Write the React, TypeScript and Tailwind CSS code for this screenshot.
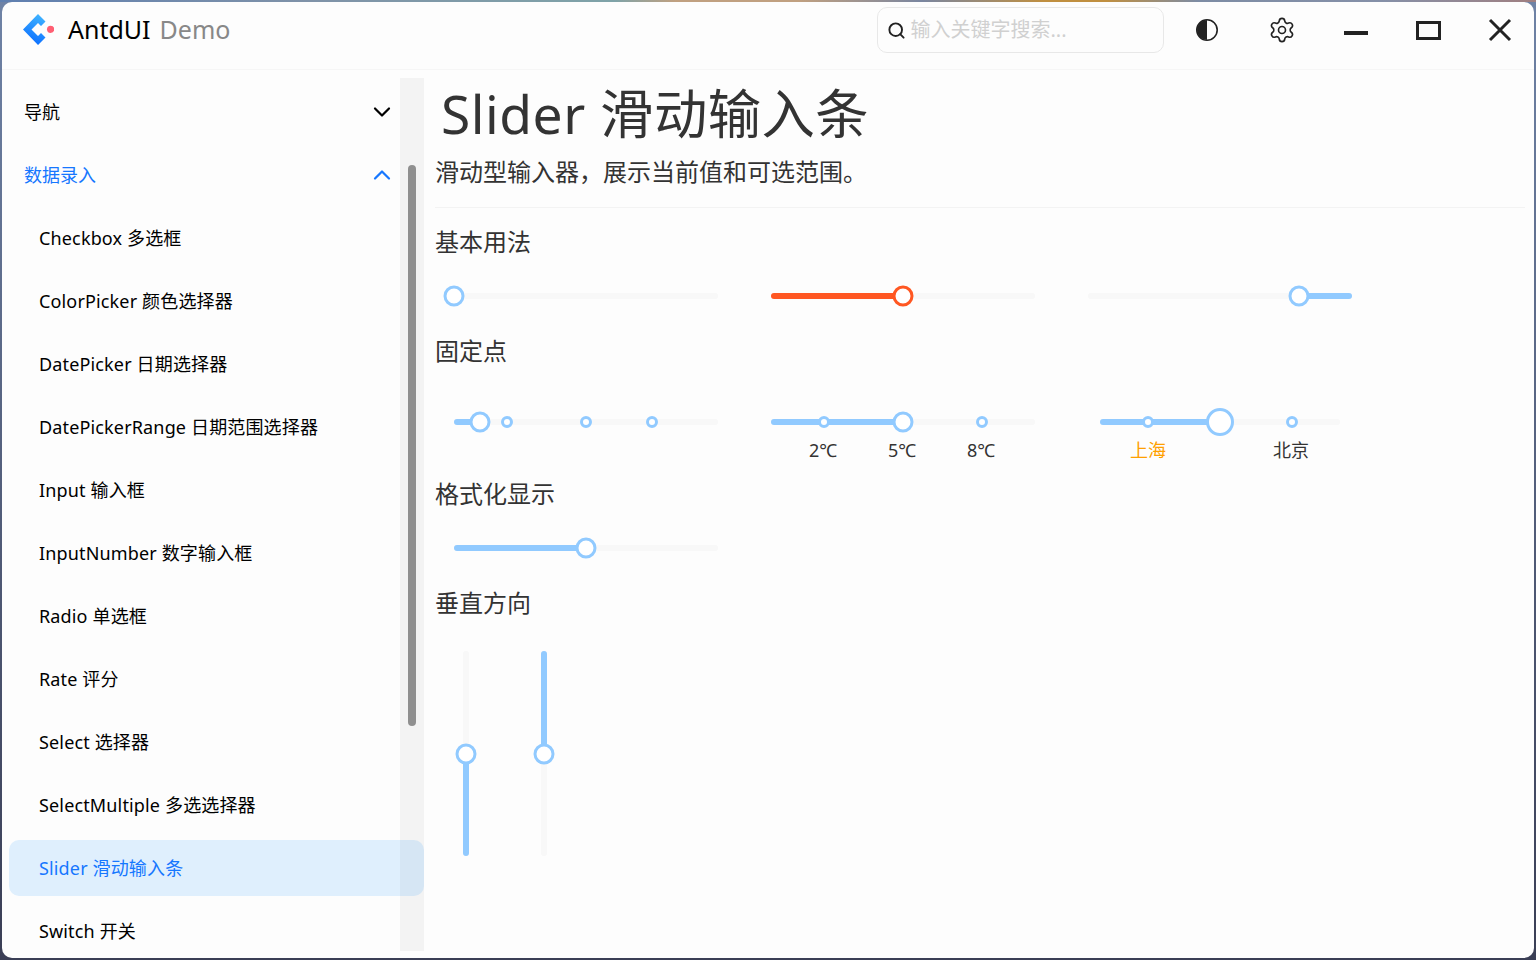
import { ChevronDown, ChevronUp, Search, Settings } from "lucide-react";

const menuItems = [
  "Checkbox 多选框",
  "ColorPicker 颜色选择器",
  "DatePicker 日期选择器",
  "DatePickerRange 日期范围选择器",
  "Input 输入框",
  "InputNumber 数字输入框",
  "Radio 单选框",
  "Rate 评分",
  "Select 选择器",
  "SelectMultiple 多选选择器",
  "Slider 滑动输入条",
  "Switch 开关",
];

interface SliderProps {
  width?: number;
  from?: number;
  to: number;
  thumb: number;
  thumbSize?: number;
  dots?: number[];
  active?: string;
  thumbBorder?: string;
}

function Slider({ width = 264, from = 0, to, thumb, thumbSize = 21, dots = [], active = "bg-[#91caff]", thumbBorder = "border-[#91caff]" }: SliderProps) {
  return (
    <div className="relative h-[6px] rounded-full bg-[#f8f8f8]" style={{ width }}>
      <div className={`absolute top-0 h-[6px] rounded-full ${active}`} style={{ left: from, width: to - from }} />
      {dots.map((d) => (
        <div
          key={d}
          className="absolute top-[-3px] h-3 w-3 -translate-x-1/2 rounded-full border-[3px] border-[#91caff] bg-white"
          style={{ left: d }}
        />
      ))}
      <div
        className={`absolute top-[3px] -translate-x-1/2 -translate-y-1/2 rounded-full border-[3px] bg-white ${thumbBorder}`}
        style={{ left: thumb, width: thumbSize, height: thumbSize }}
      />
    </div>
  );
}

function VerticalSlider({ reverse = false }: { reverse?: boolean }) {
  return (
    <div className="relative h-[205px] w-[6px] rounded-full bg-[#f8f8f8]">
      <div className={`absolute left-0 w-[6px] rounded-full bg-[#91caff] ${reverse ? "top-0 h-[103px]" : "bottom-0 h-[102px]"}`} />
      <div className="absolute left-[3px] top-[103px] h-[21px] w-[21px] -translate-x-1/2 -translate-y-1/2 rounded-full border-[3px] border-[#91caff] bg-white" />
    </div>
  );
}

function Heading({ children, className }: { children: string; className: string }) {
  return <h3 className={`text-[24px] leading-[32px] text-[#333] ${className}`}>{children}</h3>;
}

function Logo() {
  return (
    <svg width="32" height="32" viewBox="0 0 32 32">
      <defs>
        <linearGradient id="logoBlue" x1="0.7" y1="0" x2="0.4" y2="1">
          <stop offset="0" stopColor="#40b4ff" />
          <stop offset="1" stopColor="#0a6cff" />
        </linearGradient>
      </defs>
      <path
        d="M16 0 L23.5 7.5 L19 12 L16 9 L9.5 15.5 L16 22 L19 19 L23.5 23.5 L16 31 L1 15.5 Z"
        fill="url(#logoBlue)"
      />
      <circle cx="28.6" cy="15.3" r="3.6" fill="#ff5f73" />
    </svg>
  );
}

export default function App() {
  return (
    <div className="h-[960px] w-[1536px] overflow-hidden bg-gradient-to-b from-[#6f83a6] to-[#3a3e55] font-['Noto_Sans','Noto_Sans_CJK_SC',sans-serif]">
      <div className="h-[2px] bg-[linear-gradient(90deg,#5f7fb0_0%,#7f92a8_20%,#7fa3a8_40%,#c0a080_44%,#c0a080_52%,#7a86a0_60%,#c08f40_68%,#c08f40_72%,#7d8ca4_78%,#8590a8_90%,#a07f80_100%)]" />
      <div className="mx-[2px] flex h-[956px] flex-col overflow-hidden rounded-[10px] bg-[#fdfdfd]">
        <header className="flex h-[68px] shrink-0 items-center border-b border-[#f6f6f6] pb-[11px] pl-5">
          <Logo />
          <span className="ml-[14px] text-[25px] text-black">AntdUI</span>
          <span className="ml-[9px] text-[25px] text-[#888]">Demo</span>
          <div className="ml-[647px] flex h-[46px] w-[287px] items-center rounded-[10px] border border-[#e8e8e8] pl-[9px]">
            <Search className="h-[19px] w-[19px] text-[#222]" strokeWidth={2.4} />
            <span className="ml-[4px] text-[20px] text-[#d0d0d0]">输入关键字搜索...</span>
          </div>
          <svg className="ml-[31px]" width="24" height="24" viewBox="0 0 24 24">
            <circle cx="12" cy="12" r="10.2" fill="none" stroke="#222" strokeWidth="1.6" />
            <path d="M12 2 A10 10 0 0 0 12 22 Z" fill="#222" />
          </svg>
          <Settings className="ml-[49px] h-[28px] w-[28px] text-[#222]" strokeWidth={1.4} />
          <div className="ml-[48px] mt-[6px] h-1 w-6 bg-[#222]" />
          <div className="ml-[48px] h-[19px] w-[25px] border-[3px] border-[#222]" />
          <svg className="ml-[47px]" width="24" height="24" viewBox="0 0 24 24">
            <path d="M2 2 L22 22 M22 2 L2 22" stroke="#222" strokeWidth="3" fill="none" />
          </svg>
        </header>
        <div className="flex min-h-0 flex-1">
          <aside className="relative mb-[7px] mt-[8px] w-[422px] shrink-0 overflow-hidden">
            <div className="absolute bottom-0 right-0 top-0 w-6 bg-[#f3f3f3]" />
            <div className="absolute right-[8px] top-[87px] h-[561px] w-2 rounded-full bg-[#8f8f8f]" />
            <nav className="relative pl-[7px] pt-[6px] text-[18px]">
              <div className="flex h-14 items-center justify-between pl-[15px] pr-[28px] text-black">
                <span>导航</span>
                <ChevronDown className="h-[28px] w-[28px]" strokeWidth={1.9} />
              </div>
              <div className="mt-[7px] flex h-14 items-center justify-between pl-[15px] pr-[28px] text-[#1677ff]">
                <span>数据录入</span>
                <ChevronUp className="h-[28px] w-[28px]" strokeWidth={1.9} />
              </div>
              {menuItems.map((item) => {
                const selected = item.startsWith("Slider");
                return (
                  <div
                    key={item}
                    className={`mt-[7px] flex h-14 items-center rounded-[10px] pl-[30px] tracking-[0.15px] ${selected ? "bg-[#0c89fe]/12 text-[#1677ff]" : "text-black"}`}
                  >
                    {item}
                  </div>
                );
              })}
            </nav>
          </aside>
          <main className="min-w-0 flex-1 pl-[11px] pr-[9px]">
            <h1 className="ml-[6px] mt-[8px] text-[53.33px] leading-[72px] tracking-[0.5px] text-[#333]">Slider 滑动输入条</h1>
            <p className="mt-[5px] text-[24px] leading-[34px] text-[#333]">滑动型输入器，展示当前值和可选范围。</p>
            <div className="mt-[18px] h-px bg-[#f3f3f3]" />
            <Heading className="mt-[18px]">基本用法</Heading>
            <div className="ml-[19px] mt-[35px] flex gap-[53px]">
              <Slider to={0} thumb={0} />
              <Slider to={132} thumb={132} active="bg-[#ff5722]" thumbBorder="border-[#ff5722]" />
              <Slider from={211} to={264} thumb={211} />
            </div>
            <Heading className="mt-[36px]">固定点</Heading>
            <div className="ml-[19px] mt-[52px] flex">
              <Slider to={26} thumb={26} dots={[53, 132, 198]} />
              <div className="ml-[53px] flex flex-col">
                <Slider to={132} thumb={132} dots={[53, 211]} />
              </div>
              <div className="ml-[65px]">
                <Slider width={240} to={120} thumb={120} thumbSize={28} dots={[48, 192]} />
              </div>
            </div>
            <div className="relative ml-[19px] mt-[13px] h-6 text-[18px] leading-6 text-[#333]">
              <span className="absolute left-[355px]">2℃</span>
              <span className="absolute left-[434px]">5℃</span>
              <span className="absolute left-[513px]">8℃</span>
              <span className="absolute left-[676px] text-[#ffa000]">上海</span>
              <span className="absolute left-[819px]">北京</span>
            </div>
            <Heading className="mt-[16px]">格式化显示</Heading>
            <div className="ml-[19px] mt-[35px]">
              <Slider to={132} thumb={132} />
            </div>
            <Heading className="mt-[36px]">垂直方向</Heading>
            <div className="ml-[28px] mt-[32px] flex gap-[72px]">
              <VerticalSlider />
              <VerticalSlider reverse />
            </div>
          </main>
        </div>
      </div>
    </div>
  );
}
